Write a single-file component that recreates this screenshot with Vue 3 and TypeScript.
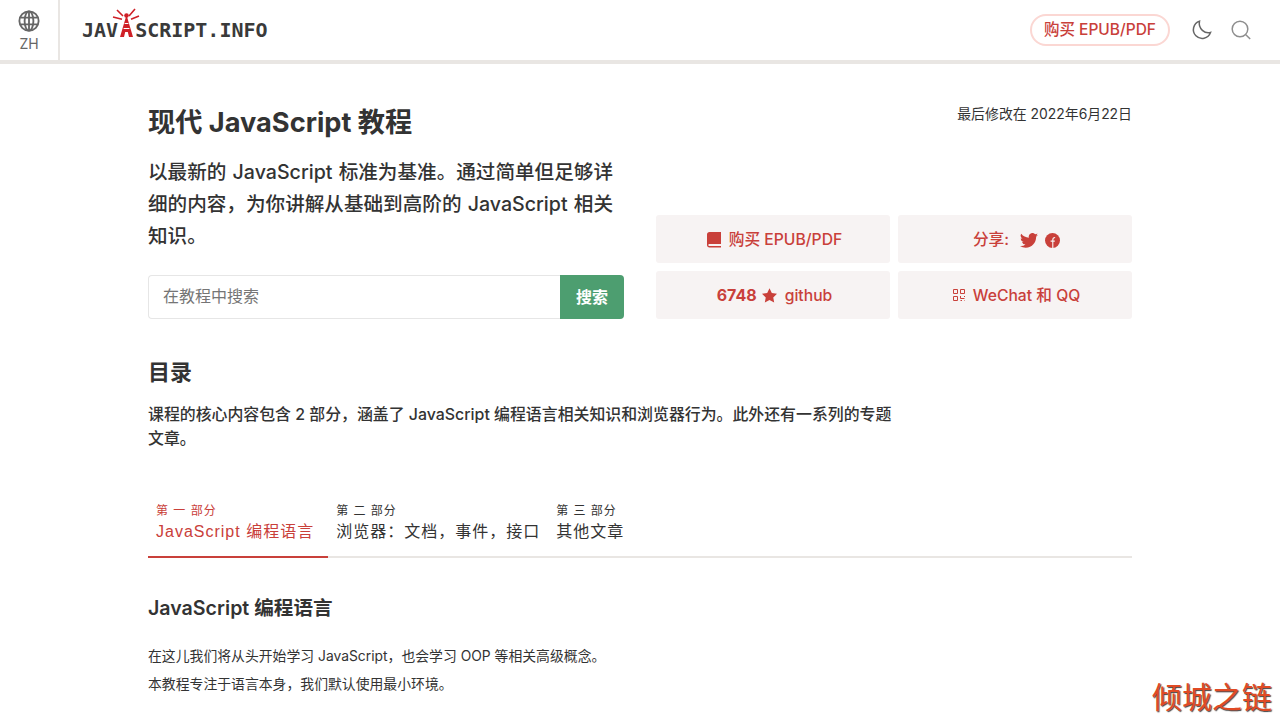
<script setup lang="ts">
interface Tab {
  part: string
  title: string
  active?: boolean
}

const tabs: Tab[] = [
  { part: '第 一 部分', title: 'JavaScript 编程语言', active: true },
  { part: '第 二 部分', title: '浏览器：文档，事件，接口' },
  { part: '第 三 部分', title: '其他文章' },
]
</script>

<template>
  <div class="page">
    <header class="topbar">
      <div class="lang">
        <svg class="globe" width="22" height="22" viewBox="0 0 24 24" fill="none" stroke="#666" stroke-width="2">
          <circle cx="12" cy="12" r="10.500" />
          <ellipse cx="12" cy="12" rx="4.800" ry="10.500" />
          <path d="M12 1.500v21M2.400 8.400h19.200M2.400 15.600h19.200" />
        </svg>
        <span>ZH</span>
      </div>
      <a class="logo">
        <span>JAV</span>
        <svg class="tower" width="32" height="32" viewBox="0 0 32 32" fill="none" stroke="#cf2027">
          <path d="M16.500 9 10 31h4l1.200-5h2.600l1.200 5h4Z" fill="#cf2027" stroke="none" />
          <path d="M14.600 17.500h3.800M13.600 22.500h5.800" stroke="#fff" stroke-width="1.100" />
          <circle cx="16.500" cy="9.500" r="2.300" fill="#cf2027" stroke="none" />
          <path d="m7 4 6 6M25 3l-6 7M3 11l9 2.200M29 10l-8 3.200" stroke-width="1.600" />
        </svg>
        <span>SCRIPT.INFO</span>
      </a>
      <div class="spacer"></div>
      <a class="buy-pill">购买 EPUB/PDF</a>
      <svg class="tool moon" width="22" height="22" viewBox="0 0 22 22" fill="none" stroke="#666" stroke-width="1.500">
        <path d="M8.500 2.200a8.800 8.800 0 1 0 11 11.300c-5.500 1.600-12.500-3.500-11-11.300Z" />
      </svg>
      <svg class="tool search" width="22" height="22" viewBox="0 0 22 22" fill="none" stroke="#8e8e8e" stroke-width="1.500">
        <circle cx="10" cy="10" r="7.800" />
        <path d="m15.800 15.800 4.400 4.200" />
      </svg>
    </header>

    <main class="content">
      <section class="hero">
        <div class="hero-left">
          <h1>现代 JavaScript 教程</h1>
          <p class="lead">以最新的 JavaScript 标准为基准。通过简单但足够详细的内容，为你讲解从基础到高阶的 JavaScript 相关知识。</p>
          <form class="search-form" @submit.prevent>
            <input class="search-input" type="text" placeholder="在教程中搜索" />
            <button class="search-btn" type="submit">搜索</button>
          </form>
        </div>
        <div class="hero-right">
          <div class="updated">最后修改在 2022年6月22日</div>
          <div class="actions">
            <a class="action">
              <svg width="14" height="16" viewBox="0 0 14 16" fill="#c9403a">
                <path d="M2.500 0H14v12H2.800c-1 0-1.500.4-1.500 1s.5 1 1.500 1H14v1.500H2.500C1 15.500 0 14.600 0 13V2.500C0 1 1 0 2.500 0Z" />
              </svg>
              <span>购买 EPUB/PDF</span>
            </a>
            <a class="action">
              <span>分享:</span>
              <svg class="twitter" width="18" height="15" viewBox="0 0 24 20" fill="#c9403a">
                <path d="M24 2.400a9.800 9.800 0 0 1-2.800.8A4.900 4.900 0 0 0 23.300.5a9.800 9.800 0 0 1-3.100 1.200 4.900 4.900 0 0 0-8.400 4.500A14 14 0 0 1 1.700.9a4.900 4.900 0 0 0 1.500 6.600 4.900 4.900 0 0 1-2.200-.6v.1a4.900 4.900 0 0 0 3.900 4.800 4.900 4.900 0 0 1-2.200.1 4.900 4.900 0 0 0 4.600 3.400A9.900 9.900 0 0 1 0 17.300 14 14 0 0 0 7.500 19.500c9 0 14-7.500 14-14v-.6A10 10 0 0 0 24 2.400Z" />
              </svg>
              <svg class="facebook" width="15" height="15" viewBox="0 0 16 16">
                <circle cx="8" cy="8" r="8" fill="#c9403a" />
                <path d="M8.300 16V7.500c0-1.800.7-2.700 2.500-2.700M6 8.600h4.400" fill="none" stroke="#f7f3f3" stroke-width="1.200" />
              </svg>
            </a>
            <a class="action">
              <b>6748</b>
              <svg class="star" width="15" height="15" viewBox="0 0 24 23" fill="#c9403a">
                <path d="m12 0 3.700 7.600 8.300 1.100-6 5.800 1.500 8.300L12 18.800l-7.500 4 1.500-8.300-6-5.800 8.300-1.100Z" />
              </svg>
              <span>github</span>
            </a>
            <a class="action">
              <svg class="qr" width="12" height="12" viewBox="0 0 12 12" fill="none" stroke="#c9403a" stroke-width="1">
                <path d="M.5.500h4v4h-4zM7.500.500h4v4h-4zM.5 7.500h4v4h-4zM7.500 7v2.500h4M11.500 7v1M7.500 11.500h1.500M11 11.500h.5" />
              </svg>
              <span>WeChat 和 QQ</span>
            </a>
          </div>
        </div>
      </section>

      <section class="toc">
        <h2>目录</h2>
        <p>课程的核心内容包含 2 部分，涵盖了 JavaScript 编程语言相关知识和浏览器行为。此外还有一系列的专题文章。</p>
      </section>

      <nav class="tabs">
        <a v-for="tab in tabs" :key="tab.part" class="tab" :class="{ active: tab.active }">
          <span class="part">{{ tab.part }}</span>
          <span class="title">{{ tab.title }}</span>
        </a>
      </nav>

      <section class="intro">
        <h3>JavaScript 编程语言</h3>
        <p>在这儿我们将从头开始学习 JavaScript，也会学习 OOP 等相关高级概念。</p>
        <p>本教程专注于语言本身，我们默认使用最小环境。</p>
      </section>
    </main>

    <div class="watermark">倾城之链</div>
  </div>
</template>

<style>
html,
body {
  margin: 0;
  background: #fff;
}
</style>

<style scoped>
.page {
  position: relative;
  width: 1280px;
  height: 720px;
  overflow: hidden;
  font-family: Inter, "Noto Sans CJK SC", sans-serif;
  color: #333;
}

.topbar {
  display: flex;
  align-items: center;
  height: 60px;
  border-bottom: 4px solid #e9e6e3;
}

.lang {
  display: flex;
  flex-direction: column;
  align-items: center;
  width: 60px;
  height: 60px;
  border-right: 2px solid #e9e6e3;
  padding-top: 10px;
  box-sizing: border-box;
  font-size: 14px;
  line-height: 16px;
  color: #666;
}

.lang span {
  margin-top: 4px;
}

.logo {
  display: flex;
  align-items: center;
  margin-left: 22px;
  font-family: "DejaVu Sans Mono", monospace;
  font-weight: 700;
  font-size: 20px;
  color: #3a3a3a;
}

.tower {
  margin: -16px -7px 0 -8px;
}

.spacer {
  flex: 1;
}

.buy-pill {
  display: flex;
  align-items: center;
  height: 28px;
  padding: 0 12px;
  border: 2px solid #fbd7d3;
  border-radius: 16px;
  font-size: 15.500px;
  line-height: 20px;
  font-weight: 500;
  color: #c9403a;
}

.tool {
  flex: none;
}

.moon {
  margin-left: 21px;
}

.search {
  margin: 0 28px 0 17px;
}

.content {
  width: 984px;
  margin-left: 148px;
}

.hero {
  display: flex;
  gap: 32px;
  padding-top: 38px;
}

.hero-left {
  width: 476px;
}

h1 {
  margin: 0;
  font-size: 27.200px;
  line-height: 42px;
  font-weight: 700;
}

.lead {
  margin: 12px 0 0;
  font-size: 19.600px;
  word-spacing: 1px;
  line-height: 32px;
  font-weight: 500;
}

.search-form {
  display: flex;
  height: 44px;
  margin-top: 23px;
}

.search-input {
  flex: 1;
  min-width: 0;
  padding: 0 14px 2px;
  border: 1px solid #e6e6e6;
  border-right: 0;
  border-radius: 4px 0 0 4px;
  outline: none;
  font: 16px Inter, "Noto Sans CJK SC", sans-serif;
}

.search-input::placeholder {
  color: #757575;
}

.search-btn {
  width: 64px;
  padding: 0 0 2px;
  border: 0;
  border-radius: 0 4px 4px 0;
  background: #4d9e70;
  color: #fff;
  font: 700 16px Inter, "Noto Sans CJK SC", sans-serif;
}

.hero-right {
  display: flex;
  flex-direction: column;
  flex: 1;
}

.updated {
  text-align: right;
  font-size: 13.900px;
  line-height: 24px;
}

.actions {
  display: grid;
  grid-template-columns: 234px 234px;
  grid-auto-rows: 48px;
  gap: 8px;
  margin-top: auto;
  justify-content: space-between;
}

.action {
  display: flex;
  align-items: center;
  justify-content: center;
  gap: 7px;
  padding: 2px 0 0 3px;
  border-radius: 3px;
  background: #f7f3f3;
  color: #c9403a;
  font-size: 15.700px;
  line-height: 20px;
  font-weight: 500;
}

.action b {
  font-size: 16px;
  font-weight: 700;
  margin: 0 -2px 2px 0;
}

.action svg + span {
  margin-left: 1px;
}

.star,
.qr {
  margin-bottom: 2px;
}

.twitter {
  margin-left: 4px;
}

.toc {
  width: 755px;
  margin-top: 37px;
}

h2 {
  margin: 0;
  font-size: 22px;
  line-height: 32px;
  font-weight: 600;
}

.toc p {
  margin: 15px 0 0;
  font-size: 15.900px;
  line-height: 24px;
  font-weight: 500;
}

.tabs {
  display: flex;
  margin-top: 52px;
  border-bottom: 2px solid #e9e6e3;
}

.tab {
  display: flex;
  flex-direction: column;
  padding: 0 8px 11px;
  font-family: "Liberation Sans", "Noto Sans CJK SC", sans-serif;
  color: #333;
}

.tab.active {
  color: #c9403a;
  margin-bottom: -2px;
  border-bottom: 2px solid #c9403a;
  padding-right: 14px;
}

.part {
  font-size: 12px;
  line-height: 16px;
  letter-spacing: 1px;
}

.title {
  font-size: 16px;
  line-height: 26px;
  letter-spacing: 1px;
}

.intro {
  margin-top: 35px;
}

h3 {
  margin: 0;
  font-size: 19.600px;
  line-height: 30px;
  font-weight: 600;
}

.intro p {
  margin: 0;
  font-size: 13.850px;
  line-height: 28px;
}

.intro h3 + p {
  margin-top: 19px;
}

.watermark {
  position: absolute;
  right: 8px;
  bottom: 4px;
  font-size: 30px;
  line-height: 38px;
  font-weight: 400;
  color: #e04a25;
  text-shadow: 1px 1px 1px #444;
}
</style>
